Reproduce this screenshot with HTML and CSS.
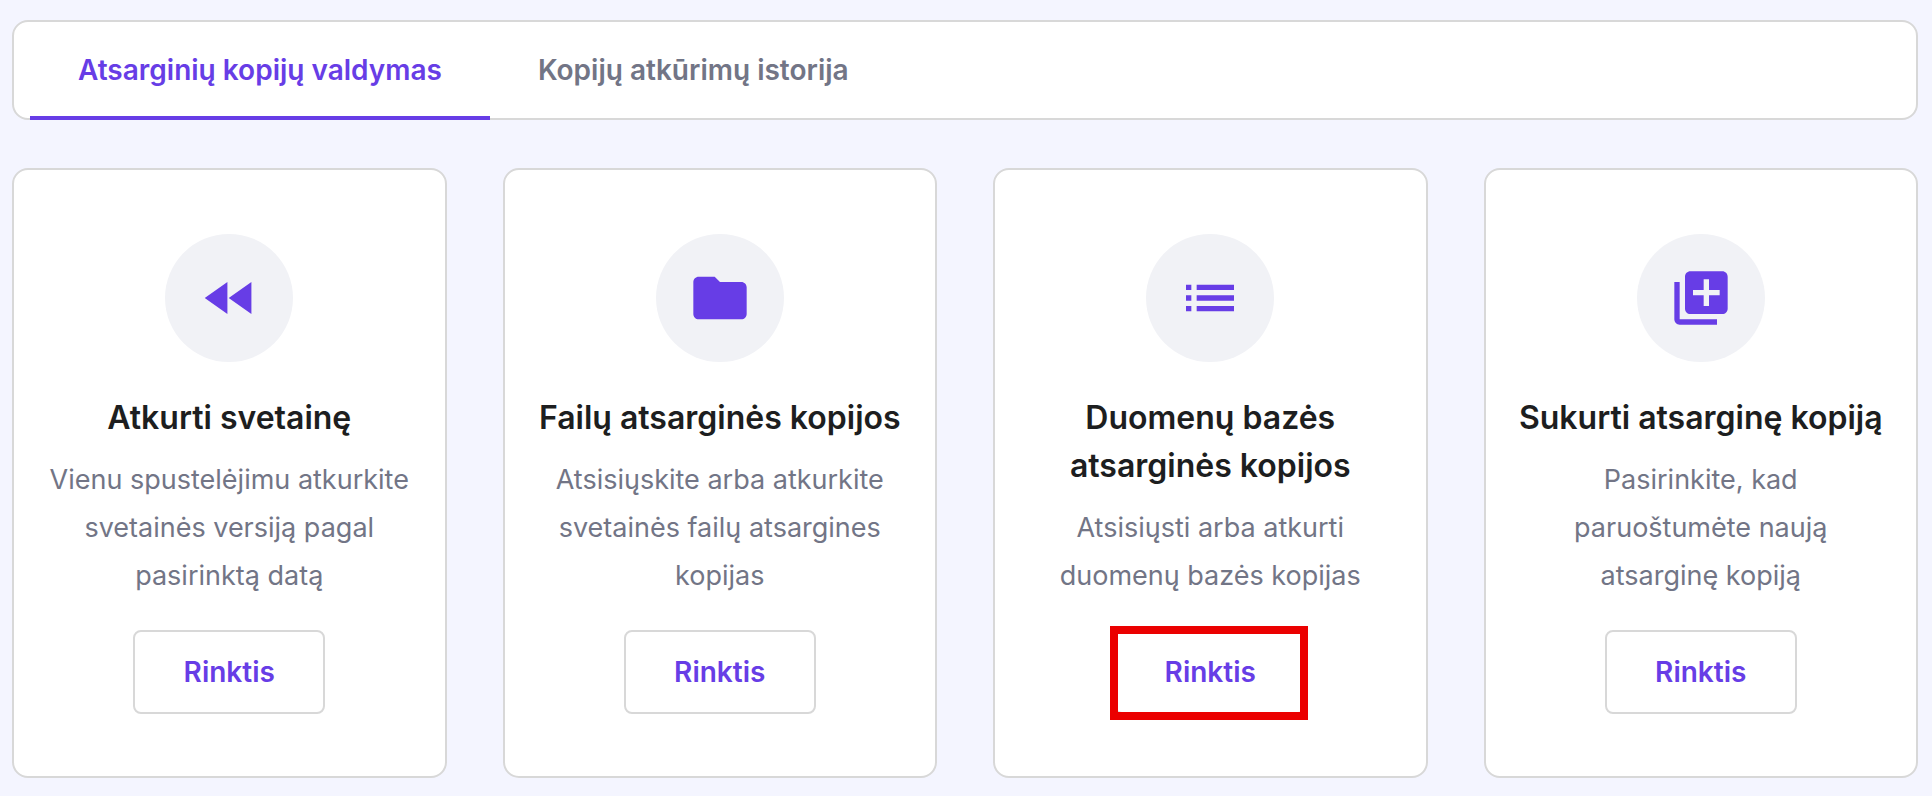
FILE: index.html
```html
<!DOCTYPE html>
<html lang="lt">
<head>
    <meta charset="UTF-8">
    <meta name="viewport" content="width=device-width, initial-scale=1.0">
    <title>Atsarginių kopijų valdymas</title>
    <link rel="stylesheet" href="styles.css">
</head>
<body>
    <div class="container">
        <nav class="tabs">
            <a href="#valdymas" class="tab active">Atsarginių kopijų valdymas</a>
            <a href="#istorija" class="tab">Kopijų atkūrimų istorija</a>
        </nav>
        <main class="cards">
            <div class="card">
                <div class="icon">
                    <svg viewBox="0 0 24 24"><path d="M11.4 18V6l-8.5 6 8.5 6zm.5-6l8.5 6V6l-8.5 6z"/></svg>
                </div>
                <h2>Atkurti svetainę</h2>
                <p>Vienu spustelėjimu atkurkite svetainės versiją pagal pasirinktą datą</p>
                <button type="button" class="btn">Rinktis</button>
            </div>
            <div class="card">
                <div class="icon">
                    <svg viewBox="0 0 24 24"><path d="M10 4H4c-1.1 0-2 .9-2 2v12c0 1.1.9 2 2 2h16c1.1 0 2-.9 2-2V8c0-1.1-.9-2-2-2h-8l-2-2z"/></svg>
                </div>
                <h2>Failų atsarginės kopijos</h2>
                <p>Atsisiųskite arba atkurkite svetainės failų atsargines kopijas</p>
                <button type="button" class="btn">Rinktis</button>
            </div>
            <div class="card">
                <div class="icon">
                    <svg viewBox="0 0 24 24"><path d="M3 13h2v-2H3v2zm0 4h2v-2H3v2zm0-8h2V7H3v2zm4 4h14v-2H7v2zm0 4h14v-2H7v2zM7 7v2h14V7H7z"/></svg>
                </div>
                <h2>Duomenų bazės atsarginės kopijos</h2>
                <p>Atsisiųsti arba atkurti duomenų bazės kopijas</p>
                <button type="button" class="btn marked">Rinktis</button>
            </div>
            <div class="card">
                <div class="icon">
                    <svg viewBox="0 0 24 24"><path d="M4 6H2v14c0 1.1.9 2 2 2h14v-2H4V6zm16-4H8c-1.1 0-2 .9-2 2v12c0 1.1.9 2 2 2h12c1.1 0 2-.9 2-2V4c0-1.1-.9-2-2-2zm-1 9h-4v4h-2v-4H9V9h4V5h2v4h4v2z"/></svg>
                </div>
                <h2>Sukurti atsarginę kopiją</h2>
                <p>Pasirinkite, kad paruoštumėte naują atsarginę kopiją</p>
                <button type="button" class="btn">Rinktis</button>
            </div>
        </main>
    </div>
</body>
</html>
```
FILE: styles.css
```css
* {
    margin: 0;
    padding: 0;
    box-sizing: border-box;
}
body {
    background-color: #f4f5ff;
    font-family: Inter, "Open Sans", sans-serif;
    font-size: 28px;
    line-height: 48px;
    color: #727586;
}
.container {
    padding: 20px 14px 18px 12px;
}

/* tabs */
.tabs {
    display: flex;
    padding: 0 16px;
    background-color: #fff;
    border: 2px solid #d8d8d8;
    border-radius: 16px;
    margin-bottom: 48px;
}
.tab {
    padding: 24px 48px 22px;
    margin-bottom: -2px;
    border-bottom: 4px solid transparent;
    font-weight: 600;
    color: #727586;
    text-decoration: none;
}
.tab.active {
    color: #673de6;
    border-bottom-color: #673de6;
}

/* cards */
.cards {
    display: grid;
    grid-template-columns: repeat(4, 1fr);
    gap: 56px;
}
.card {
    display: flex;
    flex-direction: column;
    align-items: center;
    padding: 64px 30px 62px;
    background-color: #fff;
    border: 2px solid #d8d8d8;
    border-radius: 16px;
    text-align: center;
}
.icon {
    display: flex;
    align-items: center;
    justify-content: center;
    width: 128px;
    height: 128px;
    margin-bottom: 32px;
    background-color: #f1f2f6;
    border-radius: 50%;
}
.icon svg {
    width: 64px;
    height: 64px;
    fill: #673de6;
}
.card h2 {
    margin-bottom: 14px;
    font-size: 32px;
    font-weight: 600;
    color: #1d1e20;
}
.card p {
    margin-bottom: 30px;
    font-size: 27px;
}
.btn {
    position: relative;
    min-width: 192px;
    height: 84px;
    margin-top: auto;
    background-color: #fff;
    border: 2px solid #d8d8d8;
    border-radius: 8px;
    font: inherit;
    font-weight: 600;
    color: #673de6;
    cursor: pointer;
}
/* red frame over the button */
.btn.marked::after {
    content: '';
    position: absolute;
    inset: -6px -4px -8px -6px;
    border: 8px solid #eb0000;
}
```
